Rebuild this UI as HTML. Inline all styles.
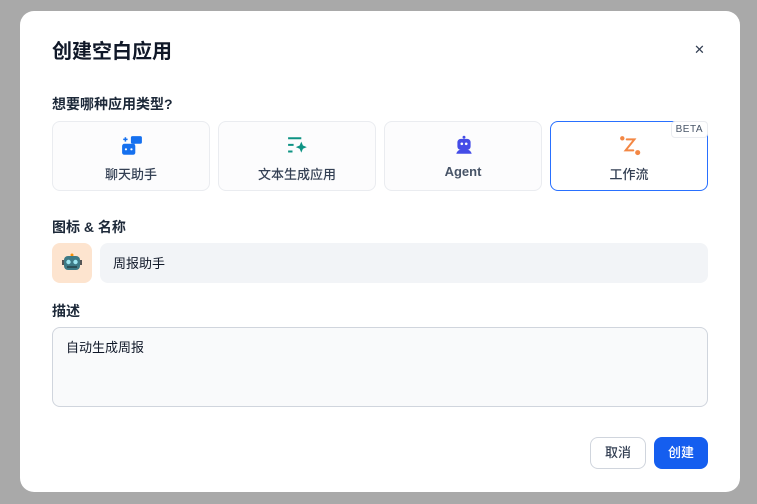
<!DOCTYPE html>
<html><head><meta charset="utf-8"><style>
*{box-sizing:border-box;margin:0;padding:0}
body{width:757px;height:504px;background:#a9a9a9;font-family:"Liberation Sans","Noto Sans CJK SC",sans-serif;position:relative;overflow:hidden;color:#1d2939}
.dlg{position:absolute;left:20px;top:11px;width:720px;height:481px;background:#fff;border-radius:14px}
.abs{position:absolute}
.title{left:32px;top:24px;font-size:20px;font-weight:700;color:#101828}
.close{left:674px;top:31px;font-size:13px;color:#344054}
.lbl{font-size:14px;font-weight:600;color:#1d2939;left:32px}
.card{top:110px;width:158px;height:70px;border:1px solid #eaecf0;border-radius:8px;background:#fcfcfd;text-align:center}
.card .t{position:absolute;left:0;right:0;top:42px;font-size:13px;color:#344054;font-weight:500}
.card svg{position:absolute;left:68px;top:13px}
.sel{border:1px solid #2970ff;background:#fff}
.beta{right:-1px;top:-1px;border:1px solid #eaecf0;border-radius:4px;font-size:10px;color:#475467;padding:2px 4px;background:#fff;letter-spacing:.5px}
.emo{left:32px;top:232px;width:40px;height:40px;background:#fde4cf;border-radius:8px}
.inp{left:80px;top:232px;width:608px;height:40px;background:#f2f4f7;border-radius:8px;font-size:13px;padding:10px 13px;color:#101828}
.ta{left:32px;top:316px;width:656px;height:80px;background:#f9fafb;border:1px solid #d0d5dd;border-radius:8px;font-size:13px;padding:9px 13px;color:#101828}
.btn{top:426px;height:32px;border-radius:8px;font-size:13px;text-align:center;line-height:30px;font-weight:500}
</style></head><body>
<div class="dlg">
<div class="abs title">创建空白应用</div>
<div class="abs close">✕</div>
<div class="abs lbl" style="top:83px">想要哪种应用类型?</div>
<div class="abs card" style="left:32px">
<svg width="22" height="22" viewBox="0 0 20 20"><rect x="9" y="1" width="10" height="7" rx="1.5" fill="#1570ef"/><path d="M11 8l-1 2 3-2z" fill="#1570ef"/><path d="M4 2v4M2 4h4" stroke="#1570ef" stroke-width="1.4"/><rect x="1" y="8" width="12" height="10" rx="2" fill="#1570ef"/><circle cx="4.5" cy="13" r="1" fill="#fff"/><circle cx="9.5" cy="13" r="1" fill="#fff"/></svg>
<div class="t">聊天助手</div></div>
<div class="abs card" style="left:198px">
<svg width="22" height="22" viewBox="0 0 20 20"><path d="M1 3h12M1 9h5M1 15h4" stroke="#0e9384" stroke-width="1.8"/><path d="M13 6l1.5 3.5L18 11l-3.5 1.5L13 16l-1.5-3.5L8 11l3.5-1.5z" fill="#0e9384"/></svg>
<div class="t">文本生成应用</div></div>
<div class="abs card" style="left:364px">
<svg width="22" height="22" viewBox="0 0 20 20"><circle cx="10" cy="2" r="1.3" fill="#444ce7"/><rect x="4" y="3.5" width="12" height="10" rx="3" fill="#444ce7"/><circle cx="8" cy="8" r="1.2" fill="#fff"/><circle cx="12" cy="8" r="1.2" fill="#fff"/><path d="M3 17c1-3 3-4 7-4s6 1 7 4z" fill="#444ce7"/></svg>
<div class="t" style="font-weight:700;color:#475467;font-size:13px">Agent</div></div>
<div class="abs card sel" style="left:530px">
<svg width="22" height="22" viewBox="0 0 20 20"><circle cx="3" cy="3" r="2" fill="#f38744"/><path d="M7 4h7l-8 10h7" stroke="#f38744" stroke-width="1.8" fill="none" stroke-linecap="round"/><circle cx="17" cy="16" r="2.3" fill="#f38744"/></svg>
<div class="t">工作流</div>
<div class="abs beta">BETA</div></div>
<div class="abs lbl" style="top:206px">图标 &amp; 名称</div>
<div class="abs emo"><svg width="40" height="40" viewBox="0 0 40 40"><circle cx="20" cy="12" r="1.5" fill="#f79009"/><rect x="12" y="13" width="16" height="14" rx="4" fill="#3e7a86"/><circle cx="16.5" cy="19" r="2.2" fill="#9ee6f0"/><circle cx="23.5" cy="19" r="2.2" fill="#9ee6f0"/><rect x="10" y="17" width="2" height="5" fill="#555"/><rect x="28" y="17" width="2" height="5" fill="#555"/><rect x="15" y="23" width="10" height="2" fill="#2c4f57"/></svg></div>
<div class="abs inp">周报助手</div>
<div class="abs lbl" style="top:290px">描述</div>
<div class="abs ta">自动生成周报</div>
<div class="abs btn" style="left:570px;width:56px;border:1px solid #d0d5dd;color:#344054;background:#fff">取消</div>
<div class="abs btn" style="left:634px;width:54px;background:#155eef;color:#fff;line-height:32px">创建</div>
</div>
</body></html>
